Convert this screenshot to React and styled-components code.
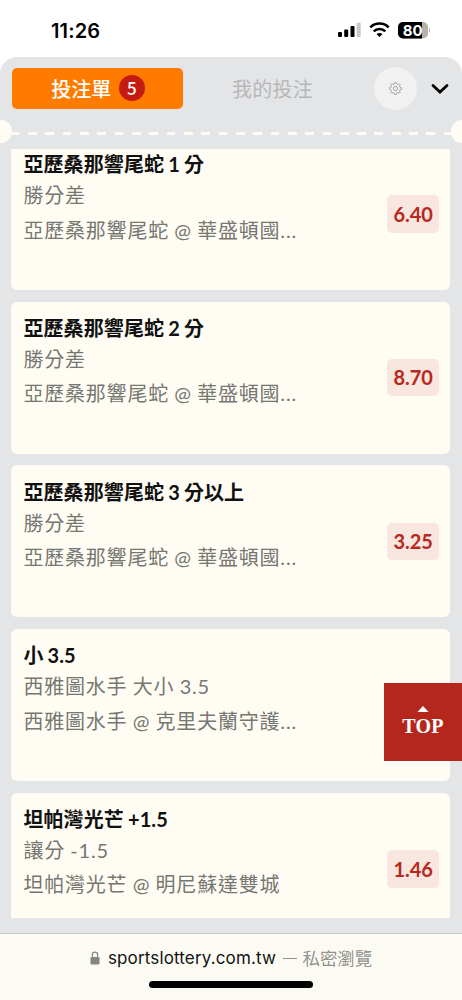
import React from 'react'
import styled, { createGlobalStyle } from 'styled-components'

const GlobalStyle = createGlobalStyle`
    * {
        box-sizing: border-box;
    }
    body {
        margin: 0;
        background: #fff;
        font-family: Lato, 'Noto Sans CJK TC', sans-serif;
    }
`

const Screen = styled.div`
    position: relative;
    display: flex;
    flex-direction: column;
    width: 462px;
    height: 1000px;
    overflow: hidden;
`

const StatusBar = styled.div`
    display: flex;
    flex: none;
    align-items: center;
    justify-content: space-between;
    height: 56.5px;
    padding: 5px 32px 0 51px;
`

const Time = styled.span`
    font-family: Inter, sans-serif;
    font-weight: 600;
    font-size: 20px;
    letter-spacing: 0.15px;
    color: #000;
`

const StatusIcons = styled.svg`
    display: block;
    width: 94px;
    height: 20px;
    margin-top: 3px;
`

const Panel = styled.main`
    display: flex;
    flex: 1;
    flex-direction: column;
    min-height: 0;
    border-radius: 17px 17px 0 0;
    background: #e4e5e7;
    overflow: hidden;
`

const Tabs = styled.div`
    display: flex;
    flex: none;
    align-items: center;
    height: 63.5px;
    padding: 0 11px 0 11.5px;
`

const Tab = styled.button`
    display: flex;
    align-items: center;
    justify-content: center;
    gap: 7.5px;
    width: ${props => props.$active ? '171px' : '180px'};
    height: 40.5px;
    padding: ${props => props.$active ? '0 0 0 2px' : '0'};
    border: 0;
    border-radius: 5px;
    background: ${props => props.$active ? '#ff7b00' : 'transparent'};
    color: ${props => props.$active ? '#fff' : '#b6b7b8'};
    font-family: Lato, 'Noto Sans CJK TC', sans-serif;
    font-size: 20px;
    font-weight: ${props => props.$active ? 500 : 400};
    letter-spacing: ${props => props.$active ? '0' : '0.2px'};
`

const Count = styled.span`
    display: flex;
    align-items: center;
    justify-content: center;
    width: 26px;
    height: 26px;
    padding-bottom: 1px;
    border-radius: 50%;
    background: #c41a12;
    font-family: 'Noto Sans CJK TC', sans-serif;
    font-size: 17px;
    font-weight: 500;
`

const Settings = styled.button`
    display: flex;
    align-items: center;
    justify-content: center;
    width: 43px;
    height: 43px;
    margin-left: 11.5px;
    padding: 0;
    border: 0;
    border-radius: 50%;
    background: #f1f1f2;
`

const Collapse = styled.svg`
    width: 18px;
    height: 12px;
    margin: 2px 0 0 13.8px;
`

const Perforation = styled.div`
    display: flex;
    flex: none;
    align-items: center;
    height: 23px;
`

const Notch = styled.span`
    width: 11.5px;
    height: 23px;
    border-radius: ${props => props.$right ? '12px 0 0 12px' : '0 12px 12px 0'};
    background: #fffdf3;
`

const Dashes = styled.span`
    flex: 1;
    height: 3px;
    margin-top: 3px;
    background: repeating-linear-gradient(to right, #fffdf3 0 7.3px, transparent 7.3px 15.9px, #fffdf3 15.9px 17.33px);
`

const List = styled.div`
    display: flex;
    flex: none;
    flex-direction: column;
    gap: 11.5px;
    height: 769px;
    margin: 6px 11.6px 0 11.4px;
    overflow: hidden;
`

const Card = styled.article`
    display: flex;
    flex: none;
    align-items: flex-start;
    justify-content: space-between;
    height: 152.2px;
    padding: 11.3px 11.5px 0 12px;
    border-radius: 6px;
    background: #fffdf3;

    /* the list is scrolled a little past its first card */
    &:first-child {
        margin-top: -11.1px;
    }
`

const Pick = styled.div`
    width: 290px;
    white-space: nowrap;

    & h3 {
        margin: 0;
        font-size: 20px;
        line-height: 31px;
        font-weight: 700;
        letter-spacing: 0.1px;
        word-spacing: -0.9px;
        color: #111;
    }

    & p {
        margin: 0;
        font-size: 20px;
        font-weight: 400;
        line-height: 31px;
        letter-spacing: 0.8px;
        word-spacing: -0.6px;
        color: #767672;
    }

    & p + p {
        margin-top: 3.5px;
    }
`

const Odds = styled.span`
    display: flex;
    align-items: center;
    justify-content: center;
    width: 51.5px;
    height: 37.5px;
    margin-top: 46.1px;
    padding-bottom: 0.5px;
    border-radius: 5px;
    background: #f8e6df;
    color: #b7281d;
    font-size: 20px;
    font-weight: 700;
`

const TopButton = styled.button`
    position: absolute;
    top: 682.5px;
    right: 0;
    display: flex;
    flex-direction: column;
    align-items: center;
    width: 78px;
    height: 78px;
    padding: 23px 0 0;
    border: 0;
    background: #b5271c;
    color: #fff;
    font-family: 'Liberation Serif', serif;
    font-size: 20px;
    font-weight: 700;
    line-height: 22px;
    letter-spacing: 0.2px;

    & svg {
        display: block;
        width: 12px;
        height: 6.5px;
        margin-bottom: 3.2px;
    }
`

const AddressBar = styled.footer`
    display: flex;
    flex: none;
    flex-direction: column;
    align-items: center;
    height: 67px;
    border-top: 1px solid #c9c9c9;
    background: #fcfbf3;
`

const Address = styled.div`
    display: flex;
    align-items: center;
    height: 47px;
    font-family: Inter, 'Noto Sans CJK TC', sans-serif;
    font-size: 17px;
    letter-spacing: 0.15px;
    color: #111;

    & svg {
        width: 10px;
        height: 14px;
        margin-right: 8px;
    }

    & small {
        margin-left: 7px;
        font-size: 17.4px;
        letter-spacing: 0;
        color: #929290;
    }

    & i {
        display: inline-block;
        width: 14px;
        height: 1.3px;
        margin-right: 5.5px;
        background: #929290;
        vertical-align: 6px;
    }
`

const HomeIndicator = styled.span`
    width: 164px;
    height: 7px;
    border-radius: 4px;
    background: #000;
`

const picks = [
    { title: '亞歷桑那響尾蛇 1 分', market: '勝分差', match: '亞歷桑那響尾蛇 @ 華盛頓國...', odds: '6.40' },
    { title: '亞歷桑那響尾蛇 2 分', market: '勝分差', match: '亞歷桑那響尾蛇 @ 華盛頓國...', odds: '8.70' },
    { title: '亞歷桑那響尾蛇 3 分以上', market: '勝分差', match: '亞歷桑那響尾蛇 @ 華盛頓國...', odds: '3.25' },
    { title: '小 3.5', market: '西雅圖水手 大小 3.5', match: '西雅圖水手 @ 克里夫蘭守護...' },
    { title: '坦帕灣光芒 +1.5', market: '讓分 -1.5', match: '坦帕灣光芒 @ 明尼蘇達雙城', odds: '1.46' },
]

const PhoneStatus = () => (
    <StatusBar>
        <Time>11:26</Time>
        <StatusIcons viewBox='0 0 94 20'>
            <rect x='2' y='10' width='4' height='5' rx='1' />
            <rect x='8.2' y='7.5' width='4' height='7.5' rx='1' />
            <rect x='14.5' y='4' width='4' height='11' rx='1' />
            <rect x='20.7' y='0.8' width='4' height='14.2' rx='1' fill='#c8c8c8' />
            <g fill='none' stroke='#000' strokeWidth='2.6'>
                <path d='M34.3 5.300a13 13 0 0 1 18.400 0' />
                <path d='M37.700 9.400a8.300 8.300 0 0 1 11.600 0' />
            </g>
            <path d='M40.500 12a5 5 0 0 1 6 0L43.500 15z' />
            <rect x='62' y='0' width='30' height='16.500' rx='5' fill='#b2b2b2' />
            <path d='M67 0h19v16.500H67a5 5 0 0 1-5-5V5a5 5 0 0 1 5-5z' />
            <path d='M93 5.700q3 2.500 0 5z' fill='#b2b2b2' />
            <text x='76.800' y='13.600' fill='#fff' fontFamily='Inter, sans-serif' fontSize='15' fontWeight='700' textAnchor='middle'>80</text>
        </StatusIcons>
    </StatusBar>
)

const BetCard = ({ pick }) => (
    <Card>
        <Pick>
            <h3>{pick.title}</h3>
            <p>{pick.market}</p>
            <p>{pick.match}</p>
        </Pick>
        {pick.odds && <Odds>{pick.odds}</Odds>}
    </Card>
)

const App = () => {
    return (
        <Screen>
            <GlobalStyle />
            <PhoneStatus />
            <Panel>
                <Tabs>
                    <Tab $active>投注單 <Count>5</Count></Tab>
                    <Tab>我的投注</Tab>
                    <Settings>
                        <svg width='13' height='13' viewBox='0 0 12 12' fill='none' stroke='#9b9b9b' strokeWidth='0.8' strokeLinejoin='round'>
                            <path d='M4.900 1.900 5.300.5h1.400l.4 1.400 1 .4 1.300-.7 1 1-.7 1.300.4 1 1.400.4v1.400l-1.400.4-.4 1 .7 1.300-1 1-1.300-.7-1 .4-.4 1.400H5.300l-.4-1.400-1-.4-1.300.7-1-1 .7-1.300-.4-1L.5 6.700V5.300l1.400-.4.4-1-.7-1.300 1-1 1.300.7z' />
                            <circle cx='6' cy='6' r='1.900' />
                        </svg>
                    </Settings>
                    <Collapse viewBox='0 0 18 12'>
                        <path d='M2 2.500l7 6.500 7-6.500' fill='none' stroke='#000' strokeWidth='2.800' strokeLinecap='round' />
                    </Collapse>
                </Tabs>
                <Perforation>
                    <Notch />
                    <Dashes />
                    <Notch $right />
                </Perforation>
                <List>
                    {picks.map(pick => <BetCard key={pick.title} pick={pick} />)}
                </List>
            </Panel>
            <TopButton>
                <svg viewBox='0 0 12 6.5'><path d='M6 0l6 6.500H0z' fill='#fff' /></svg>
                TOP
            </TopButton>
            <AddressBar>
                <Address>
                    <svg viewBox='0 0 10 14'>
                        <rect x='.5' y='6' width='9' height='7.500' rx='1.300' fill='#858585' />
                        <path d='M2.300 6V3.800a2.700 2.700 0 0 1 5.400 0V6' fill='none' stroke='#858585' strokeWidth='1.200' />
                    </svg>
                    sportslottery.com.tw
                    <small><i />私密瀏覽</small>
                </Address>
                <HomeIndicator />
            </AddressBar>
        </Screen>
    )
}
export default App
